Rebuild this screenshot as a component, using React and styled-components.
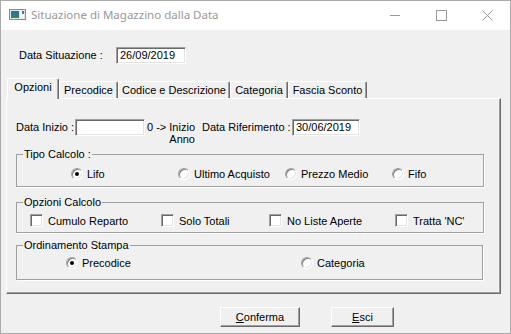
import React from 'react';
import styled, { createGlobalStyle } from 'styled-components';

const Global = createGlobalStyle`
  html, body { margin: 0; padding: 0; background: #ffffff; }
  body { font-family: "Liberation Sans", Arial, sans-serif; font-size: 11px; color: #000; }
  * { box-sizing: border-box; }
`;

const Window = styled.div`
  width: 511px;
  height: 334px;
  border: 1px solid #aaaaaa;
  display: flex;
  flex-direction: column;
  background: #f0f0f0;
`;

const TitleBar = styled.div`
  height: 29px;
  background: #ffffff;
  display: flex;
  align-items: center;
  flex: none;
`;

const AppIcon = styled.svg`
  margin-left: 8px;
  margin-top: -3px;
  flex: none;
`;

const TitleText = styled.div`
  margin-left: 5px;
  font-family: "Noto Sans", "Liberation Sans", sans-serif;
  font-size: 11.5px;
  color: #999999;
  margin-top: -2px;
  flex: 1;
`;

const CaptionButton = styled.div`
  width: 46px;
  height: 29px;
  display: flex;
  align-items: center;
  justify-content: center;
  margin-top: -1px;
`;

const Client = styled.div`
  flex: 1;
  display: flex;
  flex-direction: column;
`;

const TopRow = styled.div`
  display: flex;
  align-items: center;
  margin: 17px 0 0 18px;
`;

const Label = styled.span`
  display: inline-block;
  width: ${p => p.$w}px;
  margin-left: ${p => p.$ml || 0}px;
  line-height: 17px;
  height: 17px;
  white-space: nowrap;
  flex: none;
`;

const TextBox = styled.div`
  width: ${p => p.$w}px;
  height: 17px;
  background: #ffffff;
  border: 1px solid;
  border-color: #a0a0a0 #ffffff #ffffff #a0a0a0;
  box-shadow: inset 1px 1px 0 #696969, inset -1px -1px 0 #e3e3e3;
  padding: 0 0 0 3px;
  line-height: 15px;
  font-size: 11px;
  flex: none;
  white-space: nowrap;
`;

const TabStrip = styled.div`
  display: flex;
  align-items: flex-end;
  height: 20px;
  margin-top: 14px;
  padding-left: 6px;
  position: relative;
  z-index: 1;
`;

const Tab = styled.div`
  width: ${p => p.$w}px;
  height: ${p => (p.$active ? 21 : 17)}px;
  margin-bottom: ${p => (p.$active ? -1 : 0)}px;
  background: #f0f0f0;
  border-top: 1px solid #ffffff;
  border-left: 1px solid #ffffff;
  border-right: 1px solid #696969;
  box-shadow: inset -1px 0 0 #a0a0a0;
  border-radius: 2px 2px 0 0;
  display: flex;
  align-items: ${p => (p.$active ? 'flex-start' : 'center')};
  padding-top: ${p => (p.$active ? 2 : 0)}px;
  justify-content: center;
  white-space: nowrap;
  flex: none;
`;

const Panel = styled.div`
  margin-left: 5px;
  width: 495px;
  height: 196px;
  border: 1px solid;
  border-color: #ffffff #696969 #696969 #ffffff;
  box-shadow: inset -1px -1px 0 #a0a0a0;
  padding: 20px 0 0 9px;
  display: flex;
  flex-direction: column;
  flex: none;
`;

const DateRow = styled.div`
  display: flex;
  align-items: flex-start;
  height: 17px;
`;

const Hint = styled.div`
  margin-left: 2px;
  margin-top: 2px;
  width: 48px;
  text-align: right;
  line-height: 12px;
  white-space: nowrap;
  flex: none;
`;

const Group = styled.fieldset`
  margin: ${p => p.$mt}px 0 0 0;
  padding: ${p => p.$pt}px 0 ${p => p.$pb}px 0;
  width: ${p => p.$w}px;
  border: 1px solid #a0a0a0;
  box-shadow: 1px 1px 0 #ffffff;
  min-width: 0;
`;

const Legend = styled.legend`
  margin-left: 6px;
  padding: 0 1px;
  line-height: 13px;
  font-size: 11px;
`;

const OptionRow = styled.div`
  display: grid;
  grid-template-columns: ${p => p.$cols};
  padding-left: ${p => p.$pl}px;
  align-items: center;
`;

const Option = styled.label`
  display: flex;
  align-items: center;
  white-space: nowrap;
  height: 13px;
`;

const Radio = styled.span`
  width: 12px;
  height: 12px;
  border-radius: 50%;
  background: #ffffff;
  border: 1px solid;
  border-color: #a0a0a0 #ffffff #ffffff #a0a0a0;
  box-shadow: inset 1px 1px 0 #808080, inset -1px -1px 0 #e3e3e3;
  margin-right: 4px;
  display: flex;
  align-items: center;
  justify-content: center;
  flex: none;
  &::after {
    content: '';
    width: 4px;
    height: 4px;
    border-radius: 50%;
    background: ${p => (p.$checked ? '#000' : 'transparent')};
  }
`;

const Check = styled.span`
  width: 13px;
  height: 13px;
  background: #ffffff;
  border: 1px solid;
  border-color: #a0a0a0 #ffffff #ffffff #a0a0a0;
  box-shadow: inset 1px 1px 0 #696969, inset -1px -1px 0 #e3e3e3;
  margin-right: 5px;
  flex: none;
`;

const ButtonRow = styled.div`
  display: flex;
  gap: 31px;
  margin-top: 13px;
  padding-left: 219px;
`;

const Button = styled.button`
  width: ${p => p.$w}px;
  height: 20px;
  padding: 0;
  background: #f0f0f0;
  border: 1px solid;
  border-color: #ffffff #696969 #696969 #ffffff;
  box-shadow: inset -1px -1px 0 #a0a0a0;
  font-family: "Liberation Sans", Arial, sans-serif;
  font-size: 11px;
  color: #000;
  u { text-decoration: underline; }
`;

export default function App() {
  return (
    <>
      <Global />
      <Window>
        <TitleBar>
          <AppIcon width="17" height="11" viewBox="0 0 17 11">
            <defs>
              <linearGradient id="g" x1="0" y1="0" x2="0" y2="1">
                <stop offset="0" stopColor="#2b6cb0" />
                <stop offset="1" stopColor="#2e8b57" />
              </linearGradient>
            </defs>
            <rect x="0.5" y="0.5" width="16" height="10" fill="#e8e8e8" stroke="#8a8a8a" />
            <rect x="2" y="2" width="8" height="7" fill="url(#g)" />
            <rect x="11" y="2" width="4" height="7" fill="#f8f8f8" />
            <rect x="13" y="2" width="2" height="3" fill="#3a78c8" />
          </AppIcon>
          <TitleText>Situazione di Magazzino dalla Data</TitleText>
          <CaptionButton>
            <svg width="10" height="10" viewBox="0 0 10 10"><line x1="0" y1="5.5" x2="10" y2="5.5" stroke="#999" /></svg>
          </CaptionButton>
          <CaptionButton>
            <svg width="11" height="11" viewBox="0 0 11 11"><rect x="0.5" y="0.5" width="10" height="10" fill="none" stroke="#999" /></svg>
          </CaptionButton>
          <CaptionButton>
            <svg width="11" height="11" viewBox="0 0 11 11"><path d="M0.5 0.5 L10.5 10.5 M10.5 0.5 L0.5 10.5" stroke="#999" /></svg>
          </CaptionButton>
        </TitleBar>
        <Client>
          <TopRow>
            <Label $w={97}>Data Situazione :</Label>
            <TextBox $w={70}>26/09/2019</TextBox>
          </TopRow>
          <TabStrip>
            <Tab $w={52} $active>Opzioni</Tab>
            <Tab $w={59}>Precodice</Tab>
            <Tab $w={112}>Codice e Descrizione</Tab>
            <Tab $w={58}>Categoria</Tab>
            <Tab $w={79}>Fascia Sconto</Tab>
          </TabStrip>
          <Panel>
            <DateRow>
              <Label $w={59}>Data Inizio :</Label>
              <TextBox $w={70} />
              <Hint>0 -&gt; Inizio<br />Anno</Hint>
              <Label $w={90} $ml={7}>Data Riferimento :</Label>
              <TextBox $w={68}>30/06/2019</TextBox>
            </DateRow>
            <Group $mt={12} $pt={6} $pb={6} $w={468}>
              <Legend>Tipo Calcolo :</Legend>
              <OptionRow $cols="107px 107px 107px 107px" $pl={54}>
                <Option><Radio $checked />Lifo</Option>
                <Option><Radio />Ultimo Acquisto</Option>
                <Option><Radio />Prezzo Medio</Option>
                <Option><Radio />Fifo</Option>
              </OptionRow>
            </Group>
            <Group $mt={9} $pt={5} $pb={5} $w={468}>
              <Legend>Opzioni Calcolo</Legend>
              <OptionRow $cols="131px 108px 126px 100px" $pl={13}>
                <Option><Check />Cumulo Reparto</Option>
                <Option><Check />Solo Totali</Option>
                <Option><Check />No Liste Aperte</Option>
                <Option><Check />Tratta 'NC'</Option>
              </OptionRow>
            </Group>
            <Group $mt={6} $pt={4} $pb={10} $w={467}>
              <Legend>Ordinamento Stampa</Legend>
              <OptionRow $cols="235px 150px" $pl={49}>
                <Option><Radio $checked />Precodice</Option>
                <Option><Radio />Categoria</Option>
              </OptionRow>
            </Group>
          </Panel>
          <ButtonRow>
            <Button $w={80}><u>C</u>onferma</Button>
            <Button $w={63}><u>E</u>sci</Button>
          </ButtonRow>
        </Client>
      </Window>
    </>
  );
}
